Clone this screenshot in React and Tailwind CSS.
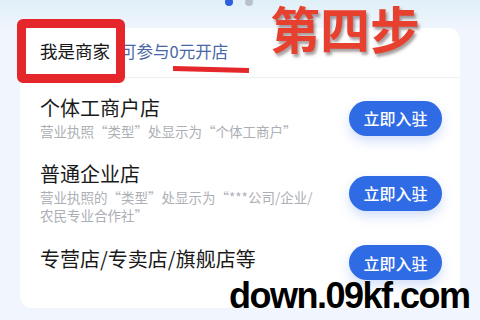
import React from "react";

const cjk = { fontFamily: '"Noto Sans CJK SC", "Noto Sans", sans-serif' };

const shops = [
  {
    title: "个体工商户店",
    desc: ["营业执照“类型”处显示为“个体工商户”"],
    pad: "pt-[18px]",
  },
  {
    title: "普通企业店",
    desc: ["营业执照的“类型”处显示为“***公司/企业/", "农民专业合作社”"],
    pad: "pt-[22px]",
  },
  {
    title: "专营店/专卖店/旗舰店等",
    desc: [],
    pad: "pt-[14px]",
    btnOffset: "mt-[7px]",
  },
];

function JoinButton({ className = "" }) {
  return (
    <button
      className={`w-[93px] h-[35px] rounded-full bg-[#2f6be5] text-white text-[16px] font-medium shadow-[0_5px_12px_rgba(47,107,229,0.22)] ${className}`}
    >
      立即入驻
    </button>
  );
}

export default function App() {
  return (
    <div
      className="relative w-[480px] h-[320px] overflow-hidden bg-[#f1f5fd]"
      style={cjk}
    >
      {/* 顶部渐变 */}
      <div className="absolute inset-x-0 top-0 h-[30px] bg-gradient-to-b from-[#e0f0f8] to-[#f1f5fd]" />

      {/* 轮播指示点 */}
      <div className="absolute top-[-2px] left-[225px] flex gap-[12px]">
        <span className="w-[8px] h-[8px] rounded-full bg-[#2c5fe0]" />
        <span className="w-[8px] h-[8px] rounded-full bg-[#b9c0c9]" />
      </div>

      {/* 卡片 */}
      <div className="relative ml-[20px] mt-[28px] w-[440px] h-[280px] rounded-[12px] bg-white flex flex-col">
        <div className="h-[50px] flex items-center pl-[20px] pb-[2px] border-b border-[#eef0f4]">
          <span className="text-[17.5px] text-[#161616]">我是商家</span>
          <span className="ml-[10px] text-[16.5px] text-[#4767a6]">可参与0元开店</span>
        </div>

        {shops.map((s) => (
          <div
            key={s.title}
            className={`flex items-center justify-between pl-[20px] pr-[18px] ${s.pad}`}
          >
            <div className="flex flex-col">
              <div className="text-[20px] leading-[24px] text-[#1a1a1a]">{s.title}</div>
              {s.desc.length > 0 && (
                <div className="mt-[2px] text-[13.5px] leading-[18px] text-[#acafb5]">
                  {s.desc.map((line) => (
                    <div key={line}>{line}</div>
                  ))}
                </div>
              )}
            </div>
            <JoinButton className={s.btnOffset || ""} />
          </div>
        ))}
      </div>

      {/* 标注：红框 */}
      <div className="absolute left-[17px] top-[19px] w-[108px] h-[64px] border-[9px] border-[#e5262a] rounded-[6px]" />

      {/* 标注：下划线 */}
      <div className="absolute left-[173px] top-[67px] w-[76px] h-[5px] bg-[#e5262a] rotate-[1.5deg]" />

      {/* 标注：第四步 */}
      <div className="absolute left-[270px] top-[1px] text-[50px] leading-[52px] font-bold text-[#e8402f] [text-shadow:2px_3px_3px_rgba(60,40,40,0.45)]">
        第四步
      </div>

      {/* 水印 */}
      <div
        className="absolute left-[229px] top-[276px] text-[36px] leading-[40px] font-bold tracking-[-1.5px] text-black"
        style={{ fontFamily: '"Liberation Sans", Arial, sans-serif' }}
      >
        down.09kf.com
      </div>
    </div>
  );
}
